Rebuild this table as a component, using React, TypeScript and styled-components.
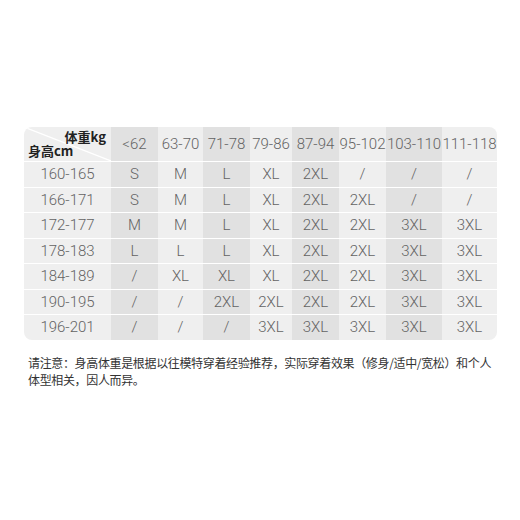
import styled, { createGlobalStyle } from 'styled-components'

const GlobalStyle = createGlobalStyle`
body {
  margin: 0;
  background: #fff;
  font-family: Roboto, "Noto Sans CJK SC", sans-serif;
}
`

const Page = styled.div`
width: 520px;
height: 520px;
padding: 127px 0 0 24px;
box-sizing: border-box;
`

const Table = styled.div`
display: grid;
grid-template-columns: 87px 47px 45px 47px 42px 47px 47px 56px 55px;
grid-template-rows: 34px repeat(7, 24.5px);
row-gap: 1px;
width: 473px;
border-radius: 8px;
overflow: hidden;
background: #fff;
`

const Cell = styled.div<{ $shade?: boolean }>`
display: flex;
align-items: center;
justify-content: center;
background: ${({ $shade }) => ($shade ? '#e1e1e1' : '#efefef')};
color: #636363;
font-family: Roboto, "Noto Sans CJK SC", sans-serif;
font-size: 15px;
font-weight: 300;
white-space: nowrap;
`

const Corner = styled.div`
position: relative;
background: #efefef;
overflow: hidden;
`

const Diagonal = styled.svg`
position: absolute;
inset: 0;
`

const CornerLabel = styled.span<{ $top?: boolean }>`
position: absolute;
font-family: "Noto Sans CJK SC", sans-serif;
font-size: 13px;
line-height: 13px;
font-weight: 700;
color: #222;
${({ $top }) => ($top ? 'top: 3px; right: 5px;' : 'bottom: 4px; left: 4px;')}
`

const Note = styled.p`
margin: 14px 0 0 4px;
width: 474px;
font-family: "Noto Sans CJK SC", sans-serif;
font-size: 12px;
line-height: 17px;
letter-spacing: -0.35px;
color: #333;
`

const weights = ['<62', '63-70', '71-78', '79-86', '87-94', '95-102', '103-110', '111-118']

const rows: [string, string[]][] = [
  ['160-165', ['S', 'M', 'L', 'XL', '2XL', '/', '/', '/']],
  ['166-171', ['S', 'M', 'L', 'XL', '2XL', '2XL', '/', '/']],
  ['172-177', ['M', 'M', 'L', 'XL', '2XL', '2XL', '3XL', '3XL']],
  ['178-183', ['L', 'L', 'L', 'XL', '2XL', '2XL', '3XL', '3XL']],
  ['184-189', ['/', 'XL', 'XL', 'XL', '2XL', '2XL', '3XL', '3XL']],
  ['190-195', ['/', '/', '2XL', '2XL', '2XL', '2XL', '3XL', '3XL']],
  ['196-201', ['/', '/', '/', '3XL', '3XL', '3XL', '3XL', '3XL']],
]

const App: React.FC = () => (
  <Page>
    <GlobalStyle />
    <Table>
      <Corner>
        <Diagonal width="87" height="34" viewBox="0 0 87 34">
          <line x1="0" y1="0" x2="87" y2="34" stroke="#fff" strokeWidth="1.2" />
        </Diagonal>
        <CornerLabel $top>体重kg</CornerLabel>
        <CornerLabel>身高cm</CornerLabel>
      </Corner>
      {weights.map((w, i) => (
        <Cell key={w} $shade={i % 2 === 0}>{w}</Cell>
      ))}
      {rows.map(([h, sizes]) => [
        <Cell key={h}>{h}</Cell>,
        ...sizes.map((s, i) => (
          <Cell key={h + i} $shade={i % 2 === 0}>{s}</Cell>
        )),
      ])}
    </Table>
    <Note>
      请注意：身高体重是根据以往模特穿着经验推荐，实际穿着效果（修身/适中/宽松）和个人体型相关，因人而异。
    </Note>
  </Page>
)

export default App
